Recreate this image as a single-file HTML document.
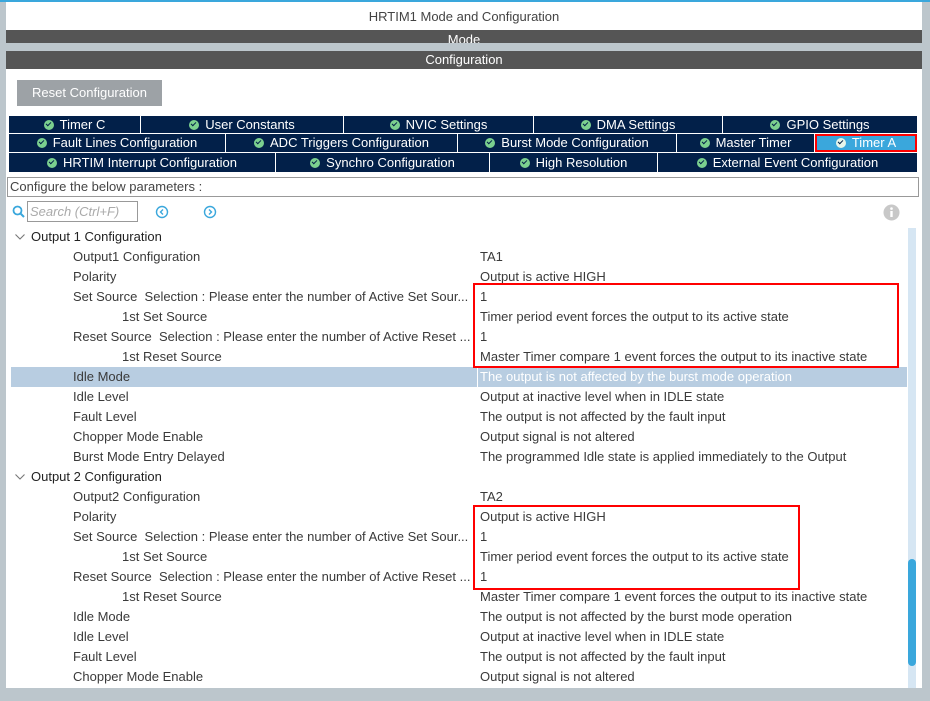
<!DOCTYPE html>
<html><head><meta charset="utf-8"><style>
*{margin:0;padding:0;box-sizing:border-box}
body{width:930px;height:701px;background:#bcc6cc;font-family:"Liberation Sans",sans-serif;font-size:13px;color:#3a3a3a;position:relative;overflow:hidden}
.abs{position:absolute}
.bar{background:#555;color:#fff;text-align:center;font-size:13px}
.tab{position:absolute;background:#022049;color:#fff;text-align:center;font-size:13px;border-right:1px solid #fff;white-space:nowrap}
.tab i{display:inline-block;width:10px;height:10px;border-radius:50%;background:#7bd08f;margin-right:6px;vertical-align:-1px;position:relative}
.tab i:after{content:"";position:absolute;left:2px;top:2px;width:4px;height:2px;border-left:1.5px solid #022049;border-bottom:1.5px solid #022049;transform:rotate(-45deg)}
.row{position:absolute;left:11px;width:896px;height:20px;line-height:20px}
.row .k{position:absolute;white-space:nowrap}
.row .v{position:absolute;left:469px;white-space:nowrap}
.row svg{position:absolute;left:4px;top:7px}
.red{position:absolute;border:2px solid #f00}
</style></head><body>
<div class="abs" style="left:0;top:0;width:930px;height:2px;background:#3aa7dc"></div>
<div class="abs" style="left:6px;top:2px;width:916px;height:28px;background:#fff;text-align:center;line-height:30px;font-size:13px;color:#444">HRTIM1 Mode and Configuration</div>
<div class="abs bar" style="left:6px;top:30px;width:916px;height:13px;line-height:19px;overflow:hidden">Mode</div>
<div class="abs bar" style="left:6px;top:51px;width:916px;height:18px;line-height:18px">Configuration</div>
<div class="abs" style="left:6px;top:69px;width:916px;height:619px;background:#fff"></div>
<div class="abs" style="left:17px;top:80px;width:145px;height:26px;background:#9da2a6;color:#fff;text-align:center;line-height:26px">Reset Configuration</div>
<div class="abs" style="left:9px;top:115px;width:908px;height:58px;background:#fff"></div>
<div class="tab" style="left:9px;top:116px;width:132px;height:17px;line-height:17px"><i></i>Timer C</div>
<div class="tab" style="left:141px;top:116px;width:203px;height:17px;line-height:17px"><i></i>User Constants</div>
<div class="tab" style="left:344px;top:116px;width:190px;height:17px;line-height:17px"><i></i>NVIC Settings</div>
<div class="tab" style="left:534px;top:116px;width:189px;height:17px;line-height:17px"><i></i>DMA Settings</div>
<div class="tab" style="left:723px;top:116px;width:194px;height:17px;line-height:17px;border-right:0"><i></i>GPIO Settings</div>
<div class="tab" style="left:9px;top:134px;width:217px;height:18px;line-height:18px"><i></i>Fault Lines Configuration</div>
<div class="tab" style="left:226px;top:134px;width:232px;height:18px;line-height:18px"><i></i>ADC Triggers Configuration</div>
<div class="tab" style="left:458px;top:134px;width:219px;height:18px;line-height:18px"><i></i>Burst Mode Configuration</div>
<div class="tab" style="left:677px;top:134px;width:138px;height:18px;line-height:18px"><i></i>Master Timer</div>
<div class="tab" style="left:815px;top:134px;width:102px;height:18px;background:#3aa7dc;border:2px solid #f00;line-height:14px"><i style="background:#e6f5ea"></i>Timer A</div>
<div class="tab" style="left:9px;top:153px;width:267px;height:19px;line-height:19px"><i></i>HRTIM Interrupt Configuration</div>
<div class="tab" style="left:276px;top:153px;width:214px;height:19px;line-height:19px"><i></i>Synchro Configuration</div>
<div class="tab" style="left:490px;top:153px;width:168px;height:19px;line-height:19px"><i></i>High Resolution</div>
<div class="tab" style="left:658px;top:153px;width:259px;height:19px;line-height:19px;border-right:0"><i></i>External Event Configuration</div>
<div class="abs" style="left:7px;top:177px;width:912px;height:20px;border:1px solid #999;line-height:18px;padding-left:2px;color:#444">Configure the below parameters :</div>
<svg class="abs" style="left:12px;top:205px" width="14" height="14"><circle cx="5.5" cy="5.5" r="4" fill="none" stroke="#3aa7dc" stroke-width="1.8"/><line x1="8.5" y1="8.5" x2="12" y2="12" stroke="#3aa7dc" stroke-width="2"/></svg>
<div class="abs" style="left:27px;top:201px;width:111px;height:21px;border:1px solid #999;color:#aaa;font-style:italic;line-height:19px;padding-left:2px">Search (Ctrl+F)</div>
<svg class="abs" style="left:155px;top:205px" width="14" height="14"><circle cx="7" cy="7" r="5.5" fill="none" stroke="#3aa7dc" stroke-width="1.4"/><path d="M8 4.5L5.5 7 8 9.5" fill="none" stroke="#3aa7dc" stroke-width="1.4"/></svg>
<svg class="abs" style="left:203px;top:205px" width="14" height="14"><circle cx="7" cy="7" r="5.5" fill="none" stroke="#3aa7dc" stroke-width="1.4"/><path d="M6 4.5L8.5 7 6 9.5" fill="none" stroke="#3aa7dc" stroke-width="1.4"/></svg>
<svg class="abs" style="left:883px;top:204px" width="17" height="17"><circle cx="8.5" cy="8.5" r="8" fill="#c8c8c8"/><rect x="7.3" y="7" width="2.4" height="6" fill="#fff"/><circle cx="8.5" cy="4.6" r="1.3" fill="#fff"/></svg>
<div class="abs" style="left:908px;top:228px;width:8px;height:460px;background:#d6e6f3"></div>
<div class="abs" style="left:908px;top:559px;width:8px;height:107px;background:#3aa7dc;border-radius:4px"></div>
<div class="abs" style="left:11px;top:367px;width:896px;height:20px;background:#b8cde1"></div>
<div class="abs" style="left:477px;top:367px;width:1px;height:20px;background:#fff"></div>

<div class="row" style="top:227px"><svg width="10" height="6"><path d="M0.5 0.5L5 5 9.5 0.5" fill="none" stroke="#777" stroke-width="1.1"/></svg><span class="k" style="left:20px;color:#222">Output 1 Configuration</span></div>
<div class="row" style="top:247px"><span class="k" style="left:62px">Output1 Configuration</span><span class="v">TA1</span></div>
<div class="row" style="top:267px"><span class="k" style="left:62px">Polarity</span><span class="v">Output is active HIGH</span></div>
<div class="row" style="top:287px"><span class="k" style="left:62px">Set Source&nbsp; Selection : Please enter the number of Active Set Sour...</span><span class="v">1</span></div>
<div class="row" style="top:307px"><span class="k" style="left:111px">1st Set Source</span><span class="v">Timer period event forces the output to its active state</span></div>
<div class="row" style="top:327px"><span class="k" style="left:62px">Reset Source&nbsp; Selection : Please enter the number of Active Reset ...</span><span class="v">1</span></div>
<div class="row" style="top:347px"><span class="k" style="left:111px">1st Reset Source</span><span class="v">Master Timer compare 1 event forces the output to its inactive state</span></div>
<div class="row" style="top:367px"><span class="k" style="left:62px">Idle Mode</span><span class="v" style="color:#fff">The output is not affected by the burst mode operation</span></div>
<div class="row" style="top:387px"><span class="k" style="left:62px">Idle Level</span><span class="v">Output at inactive level when in IDLE state</span></div>
<div class="row" style="top:407px"><span class="k" style="left:62px">Fault Level</span><span class="v">The output is not affected by the fault input</span></div>
<div class="row" style="top:427px"><span class="k" style="left:62px">Chopper Mode Enable</span><span class="v">Output signal is not altered</span></div>
<div class="row" style="top:447px"><span class="k" style="left:62px">Burst Mode Entry Delayed</span><span class="v">The programmed Idle state is applied immediately to the Output</span></div>
<div class="row" style="top:467px"><svg width="10" height="6"><path d="M0.5 0.5L5 5 9.5 0.5" fill="none" stroke="#777" stroke-width="1.1"/></svg><span class="k" style="left:20px;color:#222">Output 2 Configuration</span></div>
<div class="row" style="top:487px"><span class="k" style="left:62px">Output2 Configuration</span><span class="v">TA2</span></div>
<div class="row" style="top:507px"><span class="k" style="left:62px">Polarity</span><span class="v">Output is active HIGH</span></div>
<div class="row" style="top:527px"><span class="k" style="left:62px">Set Source&nbsp; Selection : Please enter the number of Active Set Sour...</span><span class="v">1</span></div>
<div class="row" style="top:547px"><span class="k" style="left:111px">1st Set Source</span><span class="v">Timer period event forces the output to its active state</span></div>
<div class="row" style="top:567px"><span class="k" style="left:62px">Reset Source&nbsp; Selection : Please enter the number of Active Reset ...</span><span class="v">1</span></div>
<div class="row" style="top:587px"><span class="k" style="left:111px">1st Reset Source</span><span class="v">Master Timer compare 1 event forces the output to its inactive state</span></div>
<div class="row" style="top:607px"><span class="k" style="left:62px">Idle Mode</span><span class="v">The output is not affected by the burst mode operation</span></div>
<div class="row" style="top:627px"><span class="k" style="left:62px">Idle Level</span><span class="v">Output at inactive level when in IDLE state</span></div>
<div class="row" style="top:647px"><span class="k" style="left:62px">Fault Level</span><span class="v">The output is not affected by the fault input</span></div>
<div class="row" style="top:667px"><span class="k" style="left:62px">Chopper Mode Enable</span><span class="v">Output signal is not altered</span></div>

<div class="red" style="left:473px;top:283px;width:426px;height:85px"></div>
<div class="red" style="left:473px;top:505px;width:327px;height:85px"></div>
</body></html>
